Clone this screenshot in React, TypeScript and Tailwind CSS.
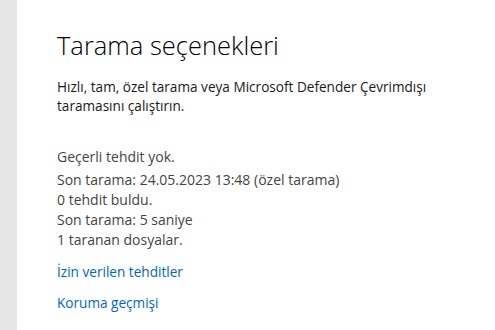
import React from "react";

const App: React.FC = () => {
    return (
        <div className="flex w-[495px] h-[330px] bg-white overflow-hidden font-['Open_Sans','Noto_Sans',sans-serif]">
            <div className="w-[17px] shrink-0 bg-[#e6e6e6]"></div>
            <div className="pl-[40px] pt-[28px]">
                <h1 className="text-[25.5px] leading-[34px] font-light text-[#000000]">
                    Tarama seçenekleri
                </h1>
                <p className="mt-[15px] w-[400px] text-[13.6px] leading-[19px] text-[#1a1a1a]">
                    Hızlı, tam, özel tarama veya Microsoft Defender Çevrimdışı
                    taramasını çalıştırın.
                </p>
                <div className="mt-[32px] text-[14px] leading-[20px] text-[#444444]">
                    <div className="mb-[3px]">Geçerli tehdit yok.</div>
                    <div>Son tarama: 24.05.2023 13:48 (özel tarama)</div>
                    <div>0 tehdit buldu.</div>
                    <div>Son tarama: 5 saniye</div>
                    <div>1 taranan dosyalar.</div>
                </div>
                <div className="mt-[12px] text-[13.6px] leading-[20px] text-[#0067c0]">
                    <a href="#" className="block">İzin verilen tehditler</a>
                    <a href="#" className="block mt-[11px]">Koruma geçmişi</a>
                </div>
            </div>
        </div>
    );
};

export default App;
